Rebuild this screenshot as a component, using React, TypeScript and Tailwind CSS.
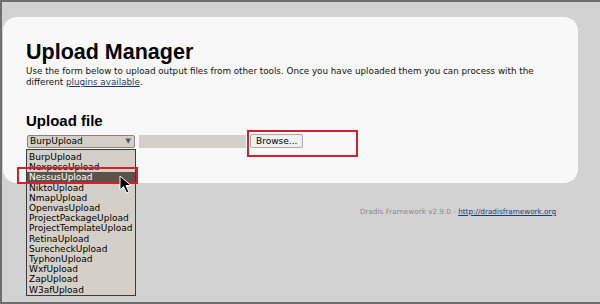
const uploaders = [
  "BurpUpload",
  "NexposeUpload",
  "NessusUpload",
  "NiktoUpload",
  "NmapUpload",
  "OpenvasUpload",
  "ProjectPackageUpload",
  "ProjectTemplateUpload",
  "RetinaUpload",
  "SurecheckUpload",
  "TyphonUpload",
  "WxfUpload",
  "ZapUpload",
  "W3afUpload",
];

const App = () => {
  return (
    <div className="relative h-[304px] w-[600px] overflow-hidden border-t-2 border-b-2 border-l-2 border-[#6e6e6e] bg-[#d2d2d2] font-['DejaVu_Sans',sans-serif]">
      <main className="ml-px mt-[15px] h-[166px] w-[575px] rounded-[14px] bg-[#f8f8f8] pl-[23px] pt-[22px]">
        <h1 className="font-['Liberation_Sans',Arial,sans-serif] text-[21.5px] font-bold leading-[26px] text-black">
          Upload Manager
        </h1>
        <p className="mt-px max-w-[540px] text-[8.75px] leading-[11px] text-[#111]">
          Use the form below to upload output files from other tools. Once you
          have uploaded them you can process with the different{" "}
          <a href="#" className="text-[#1d3b6e] underline">
            plugins available
          </a>
          .
        </p>

        <h2 className="mt-[24px] font-['Liberation_Sans',Arial,sans-serif] text-[15px] font-bold leading-[18px] text-black">
          Upload file
        </h2>
        <div className="mt-[4px] flex items-center">
          <div className="ml-px flex h-[13px] w-[108px] items-center justify-between rounded-[2px] border border-[#8a857c] bg-[#d4d0c8] pl-[2px] pr-[3px] text-[9px] leading-none text-black">
            <span>BurpUpload</span>
            <span className="text-[7px] text-[#555]">▼</span>
          </div>
          <div className="ml-[4px] h-[13px] w-[107px] bg-[#d3d0ca]" />
          <button className="ml-[4px] h-[14px] rounded-[2px] border border-[#a9a9a9] bg-[#efefef] px-[5px] text-[9px] leading-none text-black">
            Browse...
          </button>
        </div>
      </main>

      <footer className="mt-[24px] pr-[44px] text-right text-[7.25px] leading-[10px] text-[#8a8a8a]">
        Dradis Framework v2.9.0 -{" "}
        <a href="#" className="text-[#1d3b6e] underline">
          http://dradisframework.org
        </a>
      </footer>

      {/* open dropdown list */}
      <ul className="absolute left-[24px] top-[147px] w-[110px] border border-[#3c3c3c] bg-[#d4d0c8] pt-[2px] text-[9px] leading-[10.2px] text-black">
        {uploaders.map((name) => (
          <li
            key={name}
            className={
              name === "NessusUpload"
                ? "bg-[#5d524b] pl-[2px] text-white"
                : "pl-[2px]"
            }
          >
            {name}
          </li>
        ))}
      </ul>

      {/* red highlight boxes */}
      <div className="absolute left-[15px] top-[165px] h-[17px] w-[121px] border-2 border-[#d4202c]" />
      <div className="absolute left-[245px] top-[128px] h-[27px] w-[111px] border-2 border-[#d4202c]" />

      {/* mouse pointer */}
      <svg
        className="absolute left-[116px] top-[173px]"
        width="20"
        height="20"
        viewBox="0 0 20 20"
      >
        <path
          d="M2 1 L2 15 L5.5 11.5 L8.5 18 L11 17 L8 10.5 L13 10.5 Z"
          fill="#000"
          stroke="#fff"
          strokeWidth="1"
        />
      </svg>
    </div>
  );
};

export default App;
